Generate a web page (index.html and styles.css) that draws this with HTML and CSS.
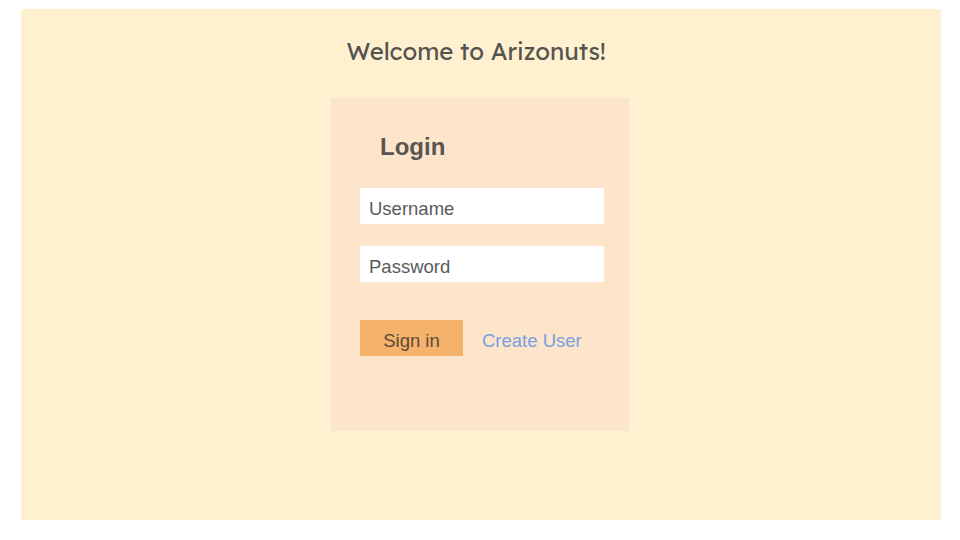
FILE: index.html
```html
<!DOCTYPE html>
<html>
<head>
<meta charset="utf-8">
<link rel="stylesheet" href="styles.css">
</head>
<body>
<main class="panel">
  <h1 class="welcome">Welcome to Arizonuts!</h1>
  <section class="card">
    <h2 class="login-title">Login</h2>
    <form class="form">
      <input class="field" type="text" placeholder="Username">
      <input class="field" type="password" placeholder="Password">
      <div class="actions">
        <button class="btn" type="button">Sign in</button>
        <a class="link" href="#">Create User</a>
      </div>
    </form>
  </section>
</main>
</body>
</html>
```

FILE: styles.css
```css
html, body {
  margin: 0;
  padding: 0;
  background: #ffffff;
}
body {
  padding: 9px 19px 20px 21px;
  font-family: "Liberation Sans", Arial, sans-serif;
}
.panel {
  width: 920px;
  height: 511px;
  background: #fff1cf;
  display: flex;
  flex-direction: column;
  align-items: center;
  box-sizing: border-box;
  padding-top: 27px;
}
.welcome {
  margin: 0 10px 0 0;
  font-family: "Lexend", "Lato", "Noto Sans", sans-serif;
  font-weight: 400;
  font-size: 24px;
  line-height: 30px;
  color: #555350;
}
.card {
  margin: 32px 2px 0 0;
  width: 298px;
  height: 333px;
  background: #fce5cb;
  box-sizing: border-box;
  padding: 32px 25px 0 29px;
}
.login-title {
  margin: 0 0 24px 20px;
  font-size: 24px;
  line-height: 34px;
  font-weight: 700;
  color: #5a5550;
}
.form {
  display: flex;
  flex-direction: column;
  gap: 22px;
}
.field {
  width: 244px;
  height: 36px;
  border: none;
  outline: none;
  background: #ffffff;
  box-sizing: border-box;
  padding: 5px 9px 0;
  font-family: "Liberation Sans", Arial, sans-serif;
  font-size: 18.5px;
  color: #555;
}
.field::placeholder {
  color: #5a5a5a;
  opacity: 1;
}
.actions {
  margin-top: 16px;
  display: flex;
  align-items: flex-start;
  gap: 19px;
}
.btn {
  width: 103px;
  height: 36px;
  border: none;
  background: #f5b26b;
  font-family: "Liberation Sans", Arial, sans-serif;
  font-size: 18.5px;
  line-height: 36px;
  color: #5c4a3a;
  padding: 3px 0 0;
  box-sizing: border-box;
  cursor: pointer;
}
.link {
  font-size: 18.5px;
  line-height: 36px;
  padding-top: 3px;
  color: #7b9fe0;
  text-decoration: none;
}
```
